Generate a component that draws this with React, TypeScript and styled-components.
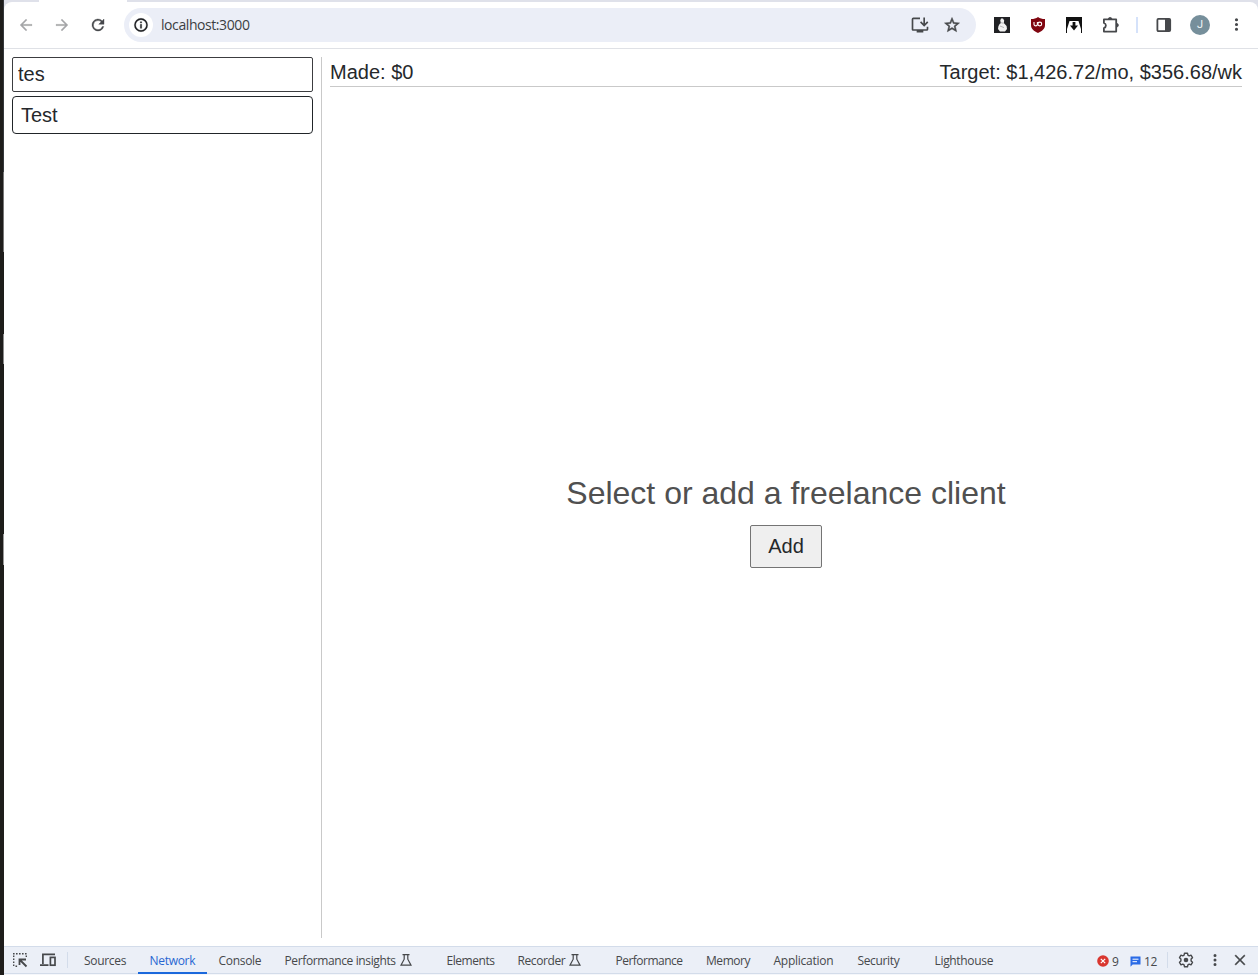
import React from "react";
import styled, { createGlobalStyle } from "styled-components";

const Global = createGlobalStyle`
  * { box-sizing: border-box; }
  body { margin: 0; background: #fff; }
`;
const Screen = styled.div`
  display: flex;
  width: 100%;
  height: 975px;
  overflow: hidden;
  background: #dfe1ea;
  font-family: "Liberation Sans", Arial, sans-serif;
  color: #25282b;
`;
const Edge = styled.div`
  width: 4px;
  flex: none;
  background: #1e1d1b;
`;
const Notch = styled.div<{ $h: number; $c: string }>`
  height: ${(p) => p.$h}px;
  width: 4px;
  border-right: 1px solid ${(p) => p.$c};
`;
const Browser = styled.div`
  display: flex;
  flex-direction: column;
  flex: 1;
  min-width: 0;
`;
const TabStrip = styled.div`
  height: 2px;
  flex: none;
  padding-left: 35px;
  background: #dfe1ea;
`;
const ActiveTab = styled.div`
  width: 88px;
  height: 2px;
  background: #fff;
`;
const Toolbar = styled.header`
  display: flex;
  align-items: center;
  height: 47px;
  flex: none;
  padding: 0 2px 1px 12px;
  background: #fff;
  border-bottom: 1px solid #dfe1e6;
  border-radius: 8px 8px 0 0;
`;
const IconSlot = styled.span<{ $w: number; $c?: string }>`
  display: flex;
  align-items: center;
  justify-content: center;
  flex: none;
  width: ${(p) => p.$w}px;
  color: ${(p) => p.$c ?? "#46484b"};
  svg { display: block; }
`;
const Omnibox = styled.div`
  display: flex;
  align-items: center;
  flex: none;
  width: 852px;
  height: 34px;
  margin-left: 4px;
  padding: 0 8px 0 5px;
  border-radius: 17px;
  background: #ebeef7;
`;
const InfoDisc = styled.span`
  display: flex;
  align-items: center;
  justify-content: center;
  width: 24px;
  height: 24px;
  border-radius: 50%;
  background: #fff;
  color: #1f2023;
`;
const Address = styled.span`
  flex: 1;
  padding-left: 8px;
  font: 14px/20px "Open Sans", sans-serif;
  letter-spacing: -0.42px;
  color: #3c3e42;
`;
const Divider = styled.span<{ $h: number; $c: string; $w?: number }>`
  flex: none;
  width: ${(p) => p.$w ?? 1}px;
  height: ${(p) => p.$h}px;
  background: ${(p) => p.$c};
`;
const Avatar = styled.span`
  width: 20px;
  height: 20px;
  border-radius: 50%;
  background: #768f9b;
  color: #f0f5f7;
  font: 11px/20px Roboto, sans-serif;
  text-align: center;
`;
const Page = styled.main`
  display: flex;
  flex: 1;
  min-height: 0;
  padding: 8px 16px 8px 8px;
  background: #fff;
  font-size: 20px;
`;
const Sidebar = styled.aside`
  display: flex;
  flex-direction: column;
  gap: 4px;
  width: 310px;
  flex: none;
  padding-right: 8px;
  border-right: 1px solid #c9c9c9;
`;
const Search = styled.input`
  height: 35px;
  width: 100%;
  padding: 0 5px;
  border: 1px solid #3c3d40;
  border-radius: 2px;
  outline: none;
  font: inherit;
  color: inherit;
`;
const Client = styled.div`
  height: 38px;
  padding: 0 8px;
  border: 1px solid #212529;
  border-radius: 4px;
  line-height: 36px;
`;
const Content = styled.section`
  display: flex;
  flex-direction: column;
  flex: 1;
  padding-left: 8px;
`;
const Summary = styled.div`
  display: flex;
  justify-content: space-between;
  height: 30px;
  line-height: 30px;
  border-bottom: 1px solid #c9c9c9;
`;
const Empty = styled.div`
  display: flex;
  flex: 1;
  flex-direction: column;
  align-items: center;
  justify-content: center;
  gap: 8px;
  padding-top: 12px;
`;
const Prompt = styled.div`
  font-size: 32px;
  line-height: 48px;
  color: #505050;
`;
const AddButton = styled.button`
  width: 72px;
  height: 43px;
  padding: 0;
  border: 1px solid #747474;
  border-radius: 2px;
  background: #efefef;
  font: inherit;
  color: inherit;
`;
const DevTools = styled.footer`
  display: flex;
  height: 28px;
  flex: none;
  margin-bottom: 1px;
  padding: 0 3px 0 4px;
  align-items: center;
  background: #ebeff7;
  border-top: 1px solid #d3dcea;
  border-bottom: 1px solid #d3dcea;
  box-shadow: 0 1px #f5f7fb;
  font: 12px/16px "Open Sans", sans-serif;
  color: #46484b;
`;
const DevTab = styled.span<{ $w: number; $ls: number; $active?: boolean }>`
  display: flex;
  align-items: center;
  gap: 4px;
  flex: none;
  width: ${(p) => p.$w}px;
  height: 28px;
  padding: 2px 0 0 11.5px;
  letter-spacing: ${(p) => p.$ls}px;
  white-space: nowrap;
  color: ${(p) => (p.$active ? "#2766d2" : "inherit")};
  box-shadow: ${(p) => (p.$active ? "inset 0 -2px #1a68dc" : "none")};
  svg { margin-top: -3px; }
`;
const Counts = styled.span`
  display: flex;
  align-items: center;
  margin-left: auto;
  padding-top: 2px;
`;
const Count = styled.span<{ $w: number }>`
  width: ${(p) => p.$w}px;
  padding-left: 3px;
  padding-top: 1px;
  letter-spacing: -0.4px;
`;

/* Material style outlines share a 24 unit grid. */
const Glyph = ({ d, size, bold = 0 }: { d: string; size: number; bold?: number }) => (
  <svg width={size} height={size} viewBox="0 0 24 24" fill="currentColor" fillRule="evenodd" stroke="currentColor" strokeWidth={bold}>
    <path d={d} />
  </svg>
);
const BACK = "M20 11H7.83l5.59-5.59L12 4l-8 8 8 8 1.41-1.41L7.83 13H20v-2z";
const FORWARD = "M12 4l-1.41 1.41L16.17 11H4v2h12.17l-5.58 5.59L12 20l8-8z";
const RELOAD = "M17.65 6.35A8 8 0 1 0 19.73 14h-2.08A6 6 0 1 1 12 6c1.66 0 3.14.69 4.22 1.78L13 11h7V4l-2.35 2.35z";
const INFO = "M11 7h2v2h-2zm0 4h2v6h-2zm1-9a10 10 0 1 0 0 20 10 10 0 0 0 0-20zm0 18a8 8 0 1 1 0-16 8 8 0 0 1 0 16z";
const STAR = "M22 9.24l-7.19-.62L12 2 9.19 8.63 2 9.24l5.46 4.73L5.82 21 12 17.27 18.18 21l-1.63-7.03L22 9.24zM12 15.4l-3.76 2.27 1-4.28-3.32-2.88 4.38-.38L12 6.1l1.71 4.04 4.38.38-3.32 2.88 1 4.28L12 15.4z";
const INSTALL = "M20 17H4V5h8V3H4a2 2 0 0 0-2 2v12c0 1.1.9 2 2 2h4v2h8v-2h4a2 2 0 0 0 2-2v-3h-2v3zM17 14l5-5-1.41-1.41L18 10.17V3h-2v7.17l-2.59-2.58L12 9l5 5z";
const DOTS = "M12 8a2 2 0 1 0 0-4 2 2 0 0 0 0 4zm0 2a2 2 0 1 0 0 4 2 2 0 0 0 0-4zm0 6a2 2 0 1 0 0 4 2 2 0 0 0 0-4z";
const CLOSE = "M19 6.41L17.59 5 12 10.59 6.41 5 5 6.41 10.59 12 5 17.59 6.41 19 12 13.41 17.59 19 19 17.59 13.41 12z";

const Gear = () => (
  <svg width="16" height="16" viewBox="0 0 16 16" fill="none" stroke="#46484b" strokeWidth="1.4" strokeLinejoin="round">
    <path d="M6.5 1.2h3l.4 1.9 1.3.7 1.8-.7 1.5 2.6-1.4 1.3v2l1.4 1.3-1.5 2.6-1.8-.7-1.3.7-.4 1.9h-3l-.4-1.9-1.3-.7-1.8.7-1.5-2.6L2.9 9V7L1.5 5.7 3 3.1l1.8.7 1.3-.7z" />
    <circle cx="8" cy="8" r="2.3" fill="#46484b" stroke="none" />
  </svg>
);
const Snowman = () => (
  <svg width="16" height="16" viewBox="0 0 16 16">
    <rect width="16" height="16" fill="#202124" />
    <path d="M7 1.5h2l1.2 2L9.8 6l2.8 3 .4 3-2 2.5H6L4 12l.4-2.8L5.6 7 7 6l-.8-2.2z" fill="#f1f1f1" />
    <path d="M6.5 5.5l3 .8M6 9l4 1.6" stroke="#a4a5a8" strokeWidth=".8" />
  </svg>
);
const Shield = () => (
  <svg width="16" height="16" viewBox="0 0 16 16">
    <path d="M8 0c2 1.6 4 2 7 2v6c0 4-3 6-7 8-4-2-7-4-7-8V2c3 0 5-.4 7-2z" fill="#800610" />
    <path d="M4 5v2.2a1.7 1.7 0 0 0 3.4 0V5" fill="none" stroke="#fff" strokeWidth="1.1" />
    <circle cx="9.8" cy="7" r="1.9" fill="none" stroke="#fff" strokeWidth="1.1" />
  </svg>
);
const DownloadBadge = () => (
  <svg width="16" height="16" viewBox="0 0 16 16">
    <rect width="16" height="16" fill="#111" />
    <path d="M3.5 4h9L15 12v4H1v-4z" fill="#fff" />
    <path d="M6.6 5h2.8v3.5H12L8 13.5 4 8.5h2.6z" fill="#111" />
  </svg>
);
const Puzzle = () => (
  <svg width="18" height="18" viewBox="0 0 18 18" fill="none" stroke="#46484b" strokeWidth="1.8" strokeLinejoin="round">
    <path d="M1.9 3.4H14.2V15.6H1.9V12.2a2.7 2.7 0 0 0 0-5.2z" />
    <path d="M6.3 3.2a1.8 1.8 0 0 1 3.6 0zM14.6 7.4a1.8 1.8 0 0 1 0 3.6z" fill="#46484b" strokeWidth=".8" />
  </svg>
);
const SidePanel = () => (
  <svg width="16" height="16" viewBox="0 0 16 16">
    <rect x="1.4" y="1.9" width="12.8" height="12.2" rx="1" fill="none" stroke="#46484b" strokeWidth="1.8" />
    <path d="M9 2h5v12H9z" fill="#46484b" />
  </svg>
);
const Inspect = () => (
  <svg width="16" height="16" viewBox="0 0 16 16" fill="none" stroke="#46484b" strokeWidth="1.4">
    <path d="M1 1.7h14M1.7 3.5V15M14.3 3.5v2M3.5 14.3h2" strokeDasharray="1.6 1.4" />
    <path d="M14.5 14.5L8 8M7.5 13V7.5H14" strokeWidth="1.8" />
  </svg>
);
const Devices = () => (
  <svg width="18" height="16" viewBox="0 0 18 16" fill="none" stroke="#46484b" strokeWidth="1.7">
    <path d="M16 2.4H3.9V12M1 13.2h8.5" />
    <rect x="11.4" y="5.4" width="4.6" height="7.8" />
  </svg>
);
const Flask = () => (
  <svg width="12" height="14" viewBox="0 0 12 14" fill="none" stroke="#46484b" strokeWidth="1.2">
    <path d="M2.5 1.6h7M4.2 1.6v4.6L1 12.2h10L7.8 6.2V1.6" />
  </svg>
);
const ErrorDot = () => (
  <svg width="12" height="12" viewBox="0 0 12 12">
    <circle cx="6" cy="6" r="5.8" fill="#d9362f" />
    <path d="M3.8 3.8l4.4 4.4M8.2 3.8L3.8 8.2" stroke="#fff" strokeWidth="1.2" />
  </svg>
);
const Message = () => (
  <svg width="11" height="11" viewBox="0 0 11 11">
    <path d="M.5.5h10v8H2.7L.5 10.8z" fill="#2a6be6" />
    <path d="M2.5 3.2h6M2.5 5.7h4.5" stroke="#fff" />
  </svg>
);

const tabs = [
  { label: "Sources", w: 65.5, ls: -0.3 },
  { label: "Network", w: 69, ls: -0.3, active: true },
  { label: "Console", w: 66, ls: -0.3 },
  { label: "Performance insights", w: 162, ls: -0.38, flask: true },
  { label: "Elements", w: 71, ls: -0.45 },
  { label: "Recorder", w: 98, ls: -0.4, flask: true },
  { label: "Performance", w: 90.5, ls: -0.52 },
  { label: "Memory", w: 67.5, ls: -0.45 },
  { label: "Application", w: 84, ls: -0.25 },
  { label: "Security", w: 77, ls: -0.35 },
  { label: "Lighthouse", w: 83, ls: -0.33 },
];

export default function App() {
  return (
    <>
      <Global />
      <Screen>
        <Edge>
          <Notch $h={172} $c="#35383b" />
          <Notch $h={80} $c="#777" />
          <Notch $h={82} $c="#1c1c1a" />
          <Notch $h={30} $c="#8b8b8b" />
          <Notch $h={170} $c="#1c1c1a" />
          <Notch $h={31} $c="#999" />
        </Edge>
        <Browser>
          <TabStrip><ActiveTab /></TabStrip>
          <Toolbar>
            <IconSlot $w={20} $c="#a5a6a8"><Glyph d={BACK} size={18} bold={0.3} /></IconSlot>
            <IconSlot $w={52} $c="#a5a6a8"><Glyph d={FORWARD} size={18} bold={0.3} /></IconSlot>
            <IconSlot $w={20}><Glyph d={RELOAD} size={18} bold={0.5} /></IconSlot>
            <IconSlot $w={12} />
            <Omnibox>
              <InfoDisc><Glyph d={INFO} size={16} bold={0.5} /></InfoDisc>
              <Address>localhost:3000</Address>
              <IconSlot $w={32}><Glyph d={INSTALL} size={20} /></IconSlot>
              <IconSlot $w={32}><Glyph d={STAR} size={18} bold={0.7} /></IconSlot>
            </Omnibox>
            <IconSlot $w={8} />
            <IconSlot $w={36}><Snowman /></IconSlot>
            <IconSlot $w={36}><Shield /></IconSlot>
            <IconSlot $w={36}><DownloadBadge /></IconSlot>
            <IconSlot $w={38}><Puzzle /></IconSlot>
            <IconSlot $w={14}><Divider $h={16} $w={2} $c="#d5e2fa" /></IconSlot>
            <IconSlot $w={40}><SidePanel /></IconSlot>
            <IconSlot $w={32}><Avatar>J</Avatar></IconSlot>
            <IconSlot $w={40}><Glyph d={DOTS} size={19} /></IconSlot>
          </Toolbar>
          <Page>
            <Sidebar>
              <Search defaultValue="tes" />
              <Client>Test</Client>
            </Sidebar>
            <Content>
              <Summary>
                <span>Made: $0</span>
                <span>Target: $1,426.72/mo, $356.68/wk</span>
              </Summary>
              <Empty>
                <Prompt>Select or add a freelance client</Prompt>
                <AddButton>Add</AddButton>
              </Empty>
            </Content>
          </Page>
          <DevTools>
            <IconSlot $w={24}><Inspect /></IconSlot>
            <IconSlot $w={32}><Devices /></IconSlot>
            <IconSlot $w={7}><Divider $h={16} $c="#d3dcea" /></IconSlot>
            <IconSlot $w={1.5} />
            {tabs.map((t) => (
              <DevTab key={t.label} $w={t.w} $ls={t.ls} $active={t.active}>
                {t.label}
                {t.flask && <Flask />}
              </DevTab>
            ))}
            <Counts>
              <ErrorDot />
              <Count $w={21}>9</Count>
              <Message />
              <Count $w={26}>12</Count>
            </Counts>
            <Divider $h={16} $c="#d3dcea" />
            <IconSlot $w={36}><Gear /></IconSlot>
            <IconSlot $w={21}><Glyph d={DOTS} size={18} /></IconSlot>
            <IconSlot $w={30}><Glyph d={CLOSE} size={18} bold={0.3} /></IconSlot>
          </DevTools>
        </Browser>
      </Screen>
    </>
  );
}
